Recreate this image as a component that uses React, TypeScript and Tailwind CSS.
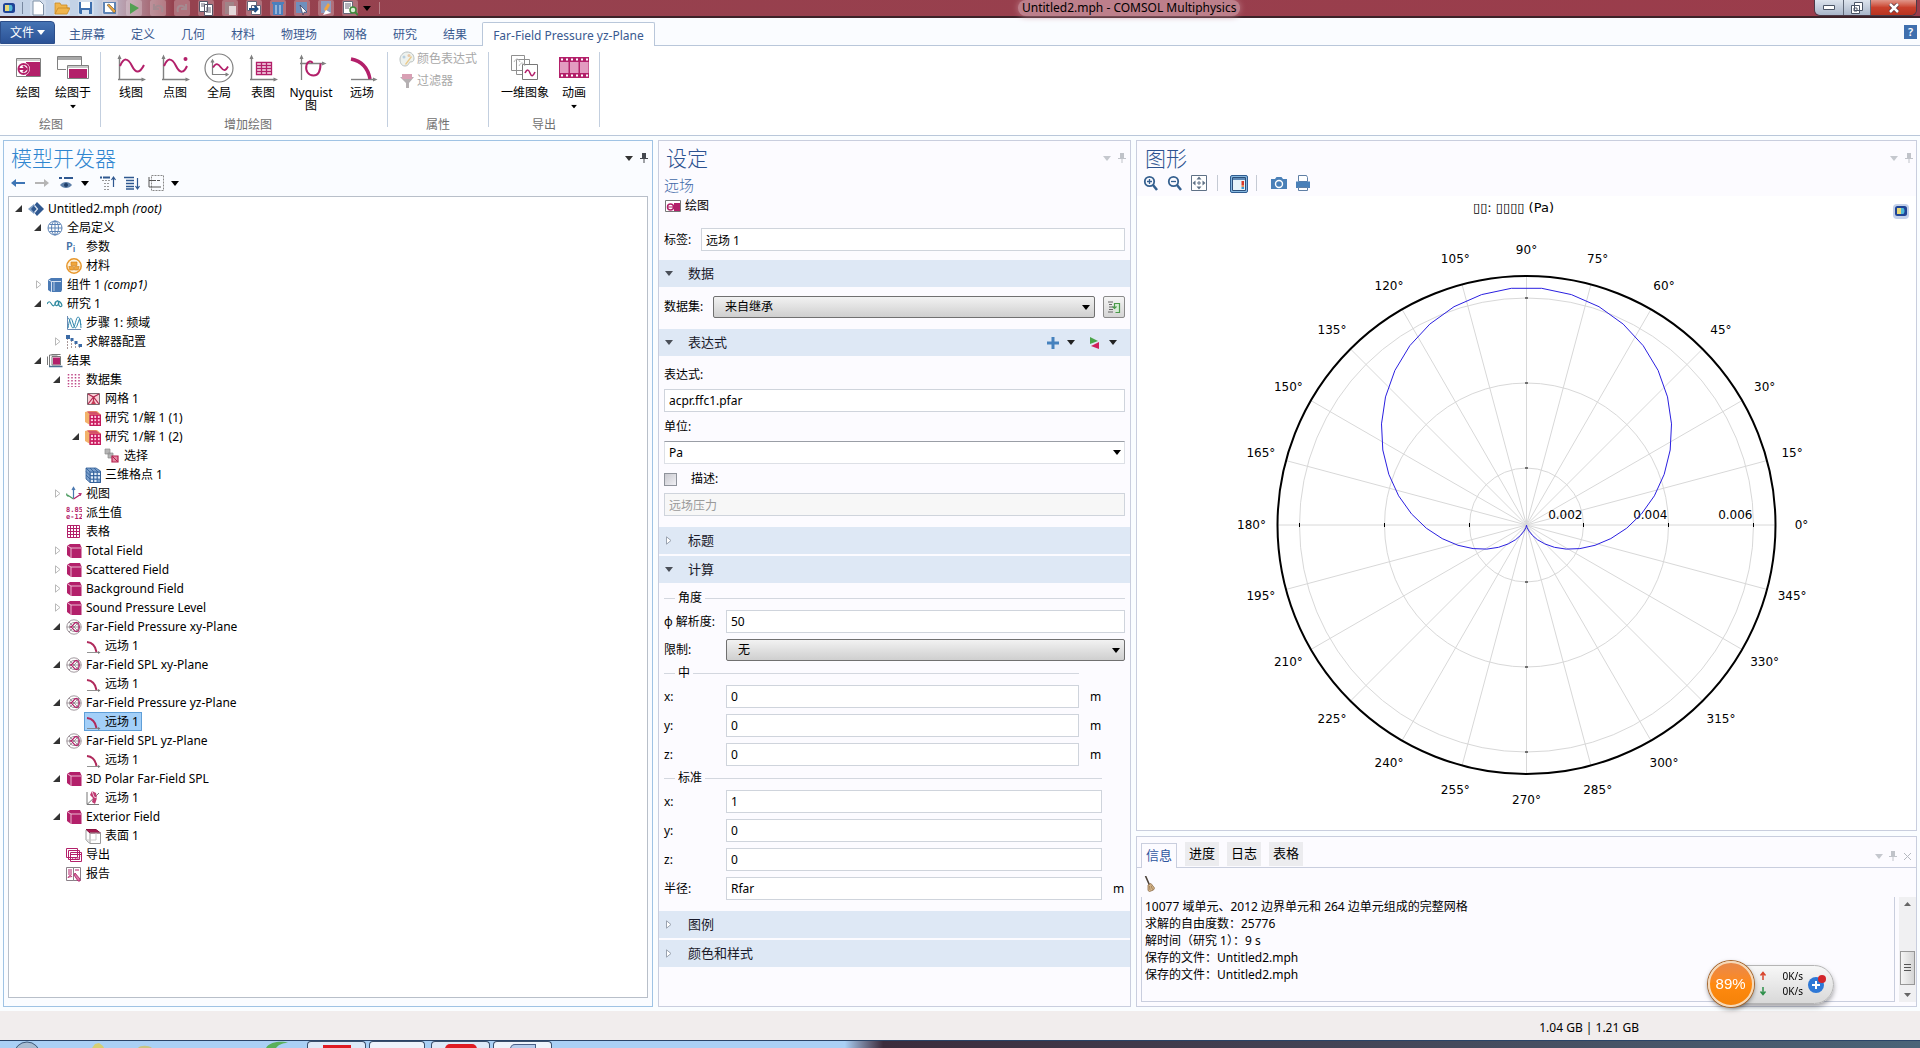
import { useId, useState } from "react"
import type { ReactNode } from "react"
import { clsx } from "clsx"

const MAGENTA = "#b3206a"
const GRAY = "#808080"
const BLUE = "#4470a6"

/* ---------- small glyphs ---------- */

function Caret({ className = "text-black" }: { className?: string }) {
  return (
    <svg className={clsx("h-[5px] w-[8px] shrink-0", className)} viewBox="0 0 8 5" fill="currentColor" aria-hidden="true">
      <path d="M0 0h8L4 5z" />
    </svg>
  )
}

function Pin({ className = "text-[#44484f]" }: { className?: string }) {
  return (
    <svg className={clsx("h-[10px] w-[8px] shrink-0", className)} viewBox="0 0 8 10" fill="currentColor" aria-hidden="true">
      <path d="M2 0h4v5h2v1H4.500v4h-1V6H0V5h2z" />
    </svg>
  )
}

/* ---------- ribbon icons, 32 x 32 ---------- */

type BigIcon = "plot" | "plotIn" | "line" | "point" | "global" | "table" | "nyquist" | "far" | "image" | "movie"

const axes = (
  <g stroke={GRAY} strokeWidth="1.4" fill={GRAY}>
    <path d="M4.500 5v23M3 27.500h25" fill="none" />
    <path d="M2.500 7l2-4.500 2 4.500zM26.500 25.500l4.500 2-4.500 2z" strokeWidth="0" />
  </g>
)

const bigIcons: Record<BigIcon, ReactNode> = {
  plot: (
    <>
      <path d="M4.500 6.500h24v18h-24z" fill="#fff" stroke={GRAY} />
      <path d="M5 7h23v2H5z" fill="#cfcfcf" />
      <path d="M14 10h14v14H14z" fill={MAGENTA} />
      <circle cx="11.500" cy="17" r="6.500" fill="#fff" />
      <circle cx="11.500" cy="17" r="5" fill="#fff" stroke={MAGENTA} strokeWidth="2" />
      <path d="M6 17h8M11 14l3.500 3-3.500 3" fill="none" stroke={MAGENTA} strokeWidth="2" />
    </>
  ),
  plotIn: (
    <>
      <path d="M.5 4.500h24v13H.500z" fill="#fff" stroke={GRAY} />
      <path d="M1 5h23v3H1z" fill="#a8a8a8" />
      <path d="M9 13h23v15H9z" fill="#fff" />
      <path d="M10.500 13.500h21v13h-21z" fill="#fff" stroke={GRAY} />
      <path d="M11 14h20v2H11z" fill="#c8c8c8" />
      <path d="M12 17h18v9H12z" fill={MAGENTA} />
    </>
  ),
  line: (
    <>
      {axes}
      <path d="M5 14c4-9 8-8 12 0s8 7 12-1" fill="none" stroke={MAGENTA} strokeWidth="2" />
    </>
  ),
  point: (
    <>
      {axes}
      <path d="M5 14c4-9 8-8 12 0s8 7 11 0" fill="none" stroke={MAGENTA} strokeWidth="2" />
      <circle cx="26.500" cy="7" r="2" fill={MAGENTA} />
    </>
  ),
  global: (
    <>
      <circle cx="16" cy="16" r="14" fill="#fff" stroke={GRAY} strokeWidth="1.200" />
      <path d="M9.500 8v14.500H24M8 10.500l1.500-2.500L11 10.500M22.500 21l2.500 1.500-2.500 1.500" fill="none" stroke={GRAY} strokeWidth="1.200" />
      <path d="M10 15.500c3-5 5-4 8 0s5 3 7-1" fill="none" stroke={MAGENTA} strokeWidth="1.800" />
    </>
  ),
  table: (
    <>
      {axes}
      <path d="M9.500 10.500h15v12h-15zM9.500 13.500h15M9.500 16.500h15M9.500 19.500h15M14.500 10.500v12M19.500 10.500v12" fill="#f8e3ee" stroke={MAGENTA} strokeWidth="1.300" />
    </>
  ),
  nyquist: (
    <>
      <path d="M6.500 5v23M5 11.500h24" fill="none" stroke={GRAY} strokeWidth="1.300" />
      <path d="M4.500 7l2-4.500 2 4.500zM27 9.500l4.500 2-4.500 2z" fill={GRAY} />
      <path d="M17.500 11c-1-2.500-5-2-6 2-1.500 6 2 10.500 7 10.500s7-5 7-12" fill="none" stroke={MAGENTA} strokeWidth="2" />
    </>
  ),
  far: (
    <>
      <path d="M5 27.500h23" stroke={GRAY} strokeWidth="1.400" />
      <path d="M27 25.500l4.500 2-4.500 2z" fill={GRAY} />
      <path d="M5 7c10 2 17 9 19 20" fill="none" stroke={MAGENTA} strokeWidth="3.500" />
    </>
  ),
  image: (
    <>
      <g fill="#fff" stroke="#909090">
        <path d="M2.500 3.500h13v15h-13zM7.500 7.500h13v15h-13z" />
        <path d="M13.500 12.500h15v15h-15z" stroke="#777" />
      </g>
      <path d="M5 10c2-4 4-4 6 0M10 14c2-4 4-4 6 0" fill="none" stroke="#b8b8b8" />
      <path d="M16 21c2-4 3.500-4 5 0s3 3.500 5-1" fill="none" stroke={MAGENTA} strokeWidth="1.600" />
    </>
  ),
  movie: (
    <>
      <path d="M1 5h30v21H1z" fill={MAGENTA} />
      <path d="M2 10h8.500v11H2zM12 10h8.500v11H12zM22 10h8.500v11H22z" fill="#e39bc0" />
      <path d="M3 7.500h27M3 23.500h27" stroke="#fff" strokeWidth="2" strokeDasharray="2 3" />
    </>
  ),
}

/* ---------- tree icons, 16 x 16 ---------- */

type TreeIcon =
  | "root" | "globe" | "param" | "material" | "component" | "study" | "freq" | "solver" | "results" | "datasets"
  | "mesh" | "solution" | "selection" | "grid3d" | "views" | "derived" | "tables" | "cube" | "polar" | "farfield"
  | "far3d" | "surface" | "export" | "report"

const treeIcons: Record<TreeIcon, ReactNode> = {
  root: (
    <>
      <path d="M0 8l6-5v10z" fill="#7d9dc4" />
      <path d="M9 1l7 7-7 7-6-7z" fill="#2f5890" />
      <path d="M6.500 4.500l3 3.500-3 3.500" fill="none" stroke="#dfe9f5" strokeWidth="1.200" />
    </>
  ),
  globe: (
    <g fill="none" stroke="#5b82b5">
      <circle cx="8" cy="8" r="7" />
      <ellipse cx="8" cy="8" rx="3.500" ry="7" />
      <path d="M1 8h14M2.500 4.500h11M2.500 11.500h11M8 1v14" />
    </g>
  ),
  param: (
    <text x="0" y="11" fontSize="11" fontWeight="600" fill={BLUE}>
      P<tspan fontSize="9" dy="2">i</tspan>
    </text>
  ),
  material: (
    <>
      <circle cx="8" cy="8" r="7.200" fill="#fff3dc" stroke="#e8972c" strokeWidth="1.500" />
      <path d="M5 4h6v3.500H5zM2.800 8.500h4.700V12H3.800zM8.500 8.500h4.700L12.200 12H8.500z" fill="#f0a63c" stroke="#cf7d17" strokeWidth=".6" />
    </>
  ),
  component: (
    <>
      <path d="M1 3l3-2h11v12l-1 2H4l-3-2z" fill="#4a7ab5" />
      <path d="M4.500 15V4.500H14M4.500 4.500L1.500 3" fill="none" stroke="#d5e2f2" />
      <path d="M7 5v9" stroke="#d5e2f2" strokeWidth=".8" />
    </>
  ),
  study: (
    <path d="M0 8c1.500-3 3-3 4.500 0s3 2 4-1 3-3 3 0-3 3.500-3.500 1 3-4 5-2 2.500 4 1 4.500-3-2-2-4" fill="none" stroke="#2e8aa0" strokeWidth="1.200" />
  ),
  freq: (
    <>
      <path d="M1.500 1v13.500H15" fill="none" stroke="#6b8bb5" />
      <path d="M2 13C4 1 5 1 7 8s3 6 5 0 2-6 3 5M2 3c2 0 3 10 5 10S10 2 12 2s2 5 3 8" fill="none" stroke="#3287ad" />
    </>
  ),
  solver: (
    <>
      <path d="M1.500 4v11M5.500 6v9M9.500 9v6M13.500 12v3" stroke="#a99" strokeDasharray="2 1" />
      <path d="M0 1h4v4H0zM4.500 4h3v3h-3zM8.500 7h3v3h-3zM12.500 10H16v3h-3.500z" fill="#3b6aa5" />
    </>
  ),
  results: (
    <>
      <path d="M.5 12V3.500M2.500 13.500V2h8M4.500 1.500h9" fill="none" stroke="#777" />
      <path d="M5 3.500h8.500v8.500H5z" fill="#fff" stroke="#777" />
      <path d="M6 4.500h7v7H6z" fill="#b3206a" />
      <path d="M2 13.500h13.500" stroke="#4a6f90" strokeWidth="1.500" />
    </>
  ),
  datasets: (
    <path d="M2.500 2v13M6 2v13M9.500 2v13M13 2v13" stroke="#c04a88" strokeWidth="1.500" strokeDasharray="1.500 1.500" />
  ),
  mesh: (
    <>
      <path d="M2.500 2.500h12v11h-12z" fill="#f9cfd6" stroke="#7a6a70" />
      <path d="M3 3l5.500 3L14 3M3 13l5.500-7L14 13M8.500 6v7" stroke="#b0284f" fill="none" strokeWidth="1.200" />
      <path d="M6 13l2.500-4 2.500 4z" fill="#c63a55" />
    </>
  ),
  solution: (
    <>
      <path d="M0 2l4-1h8l3.500 3v11H5l-5-3z" fill="#f2b26b" />
      <path d="M5 5h10.500v10.500H5zM5 8.500h10.500M5 12h10.500M8.500 5v10.500M12 5v10.500" fill="#e8508a" stroke="#c2185b" strokeWidth="1.200" />
      <path d="M6 6h2v2H6zM9.500 6h1.500v2H9.500zM13 6h1.500v2H13zM6 9.500h2V11H6zM9.500 9.500h1.500V11H9.500zM13 9.500h1.500V11H13zM6 13h2v1.500H6zM9.500 13h1.500v1.500H9.500zM13 13h1.500v1.500H13z" fill="#fbd3e2" />
      <path d="M5 4.500L2 1.500h9l4 3" fill="#d4506a" />
    </>
  ),
  selection: (
    <>
      <path d="M1 1h5v5H1zM4 5h5v5H4z" fill="#b5b5b5" stroke="#8c8c8c" strokeWidth=".7" />
      <path d="M8 8h6v6H8z" fill="#e58ba5" stroke="#b3204f" strokeWidth="1.200" />
      <path d="M8.500 8.500l5 5" stroke="#b3204f" />
    </>
  ),
  grid3d: (
    <>
      <path d="M1 1h10l4.500 3v11.500H5L1 12z" fill="#7ba0cc" stroke="#2f5c96" strokeWidth=".8" />
      <path d="M5 5h10.500v10.500H5zM5 8.500h10.500M5 12h10.500M8.500 5v10.500M12 5v10.500M1 1l4 4M1 4.500l4 4M1 8l4 4M5 1l4 4M9 1l4 4" fill="none" stroke="#2f5c96" strokeWidth=".8" />
      <path d="M6 6h2v2H6zM9.500 6h2v2h-2zM13 6h2v2h-2zM6 9.500h2v2H6zM9.500 9.500h2v2h-2zM13 9.500h2v2h-2zM6 13h2v2H6zM9.500 13h2v2h-2z" fill="#e3edf8" />
    </>
  ),
  views: (
    <g fill="none" strokeWidth="1.200">
      <path d="M7.500 12V2M6 4l1.500-2.500L9 4" stroke="#4a78b0" />
      <path d="M7.500 13L1.500 9M.5 7.500l.5 2 1.500 1" stroke="#4d9c62" />
      <path d="M7.500 13l7-4.500M12.500 7.500l2.500.2-1 2" stroke="#b3206a" />
    </g>
  ),
  derived: (
    <g fill={MAGENTA} fontSize="7" fontWeight="700" fontFamily="'DejaVu Sans Mono', monospace">
      <text x="0" y="7">8.85</text>
      <text x="0" y="14">e-12</text>
    </g>
  ),
  tables: (
    <path d="M1.500 1.500h12v12h-12zM1.500 4.500h12M1.500 7.500h12M1.500 10.500h12M4.500 1.500v12M7.500 1.500v12M10.500 1.500v12" fill="#fff" stroke={MAGENTA} />
  ),
  cube: (
    <>
      <path d="M1 3l3-2h10l1.500 3.500V15H5l-4-3z" fill="#b3206a" />
      <path d="M5 15V5h10M5 5L1.500 3" fill="none" stroke="#f0cbdd" strokeWidth=".9" />
    </>
  ),
  polar: (
    <g fill="none" stroke="#8a7f86" strokeWidth=".8">
      <circle cx="8" cy="8" r="7.200" />
      <circle cx="8" cy="8" r="4.500" />
      <path d="M.8 8h14.400M3 3l10 10M13 3L3 13" />
      <path d="M4 8c4 0 3-5 7-4.500 3 1 3 8 0 9C7 13 8 8 4 8z" stroke="#b3206a" strokeWidth="1.200" />
    </g>
  ),
  farfield: (
    <>
      <path d="M2 14.500h12" stroke="#777" strokeWidth=".8" />
      <path d="M2 4c5 .5 8.500 4 9.500 10" fill="none" stroke="#b02a5c" strokeWidth="2" />
      <path d="M13 13l2.500 1.500L13 16z" fill="#777" />
    </>
  ),
  far3d: (
    <>
      <path d="M2 2v12.500h12M2 14.500L14 3" fill="none" stroke="#777" />
      <path d="M7 1l4 2 1 5-2 6-3-2 1-4-3-3z" fill="#c03a72" />
      <path d="M7 1l2 6 3 1" fill="none" stroke="#fff" strokeWidth=".7" />
    </>
  ),
  surface: (
    <>
      <path d="M1 1.500h10L15.500 5H5z" fill="#a3184f" stroke="#8a1040" />
      <path d="M1 2v10l4 3.500h10.500V5H5v10" fill="none" stroke="#9a9a9a" />
      <path d="M1 12h10V5" fill="none" stroke="#c9c9c9" />
    </>
  ),
  export: (
    <g fill="#fff" stroke={MAGENTA}>
      <path d="M.5 1.500h11v9H.500zM2.500 3.500h11v9h-11zM4.500 5.500h11v9h-11z" />
      <path d="M4.500 7.500h11M6 13c1-3 2-3 3.500-1.500S12 12 14 9" fill="none" />
    </g>
  ),
  report: (
    <>
      <path d="M.5 1.500h7v13h-7zM7.500 1.500h7v13h-7z" fill="#fff" stroke="#8b8088" />
      <path d="M2 4h4M2 6h4M2 8h4M9 4h4" stroke={MAGENTA} />
      <path d="M2 12c1-3 3-3 4-1M9 7l5 6v2h-2L8 9z" stroke={MAGENTA} fill="#d67aa6" strokeWidth=".9" />
    </>
  ),
}

/* ---------- title bar ---------- */

const quickTools: { label: string; icon: ReactNode }[] = [
  { label: "新建", icon: <path d="M3 1h7l3.500 3.500V15H3z" fill="#fff" stroke="#7f90a5" /> },
  {
    label: "打开",
    icon: <path d="M1 3h5l1 2h6v3h3l-3 6H1zM1 14l3-6h11" fill="#f0b54d" stroke="#c98a25" strokeWidth=".8" />,
  },
  {
    label: "保存",
    icon: (
      <>
        <path d="M1 2h13v12H2l-1-1z" fill="#3d6fae" />
        <path d="M3 2h9v6H3z" fill="#fff" />
        <path d="M4 10h7v4H4z" fill="#d5e2f2" />
      </>
    ),
  },
  {
    label: "另存为",
    icon: (
      <>
        <path d="M1 2h13v12H2l-1-1z" fill="#5d83b5" />
        <path d="M3 3h9v9H3z" fill="#fff" />
        <path d="M5 5l7 8 2-2-7-7z" fill="#e9a33a" stroke="#555" strokeWidth=".6" />
      </>
    ),
  },
  { label: "计算", icon: <path d="M4 3l9 5-9 6z" fill="#52a052" /> },
  { label: "撤销", icon: <path d="M4 4v5h5M4 9c4-6 10-3 8 3" fill="none" stroke="#a58a90" strokeWidth="2" /> },
  { label: "重做", icon: <path d="M12 4v5H7M12 9C8 3 2 6 4 12" fill="none" stroke="#a58a90" strokeWidth="2" /> },
  {
    label: "复制",
    icon: (
      <>
        <path d="M1.500 1.500h8v10h-8zM6.500 4.500h8v11h-8z" fill="#fff" stroke="#556" />
        <path d="M3 4h4M3 6h3M8 8h5M8 10h5M8 12h5" stroke="#667" />
      </>
    ),
  },
  {
    label: "粘贴",
    icon: (
      <>
        <path d="M3 2h9v12H3z" fill="#a08488" />
        <path d="M7 6h7v9H7z" fill="#e5d8da" />
      </>
    ),
  },
  {
    label: "创建副本",
    icon: (
      <>
        <path d="M1.500 1.500h9v9h-9zM5.500 5.500h9v9h-9z" fill="#fff" stroke="#667" />
        <path d="M3 9h8M8.500 6l3 3-3 3" fill="none" stroke="#1f4f86" strokeWidth="2" />
      </>
    ),
  },
  {
    label: "删除",
    icon: (
      <>
        <path d="M3 4h10v11H3zM2 2h12v2H2z" fill="#4b80bd" />
        <path d="M6 5v9M10 5v9" stroke="#dbe8f6" />
      </>
    ),
  },
  {
    label: "选择",
    icon: (
      <>
        <path d="M2 2h11v11H2z" fill="#6f8fbd" />
        <path d="M6 5l7 7-3 .3L9 15z" fill="#fff" stroke="#335" strokeWidth=".7" />
      </>
    ),
  },
  {
    label: "编辑",
    icon: (
      <>
        <path d="M3 1h10v12H3z" fill="#8d9cc0" />
        <path d="M6 9l4-6 2 2-4 7z" fill="#f0a440" />
        <path d="M5 15l8-2-5-3z" fill="#fff" />
      </>
    ),
  },
  {
    label: "查找",
    icon: (
      <>
        <path d="M1.500 1.500h9v12h-9z" fill="#fff" stroke="#667" />
        <path d="M3 4h6M3 6h6M3 8h4" stroke="#667" />
        <circle cx="11" cy="10" r="3" fill="#d8efd4" stroke="#3f8a3a" strokeWidth="1.500" />
        <path d="M13 12l3 3" stroke="#3f8a3a" strokeWidth="2" />
      </>
    ),
  },
]

function ComsolMark() {
  return (
    <svg className="h-4 w-4 shrink-0" viewBox="0 0 16 16" aria-hidden="true">
      <rect x="0" y="1" width="16" height="15" rx="4" fill="#c3d0ea" />
      <rect x="2" y="3" width="12" height="10" rx="2.500" fill="#1f4496" />
      <path d="M4 5h5v6H4z" fill="#e8d878" />
      <path d="M8 5h2c2 0 2 6 0 6H8z" fill="#52b8d8" />
    </svg>
  )
}

function TitleBar() {
  return (
    <div className="relative flex h-[18px] items-center justify-between border-b-2 border-[#3c2228] bg-linear-to-r from-[#c3d2e6] from-5% via-[#95424f] via-9% to-[#9b3c4b]">
      <div className="flex items-center pl-px">
        <ComsolMark />
        <span className="ml-[5px] h-3 w-px bg-[#7888a0]" />
        <div className="flex gap-2 pl-[7px]">
          {quickTools.map((tool) => (
            <button key={tool.label} type="button" aria-label={tool.label} className="h-4 w-4 rounded-xs bg-white/25">
              <svg className="h-4 w-4" viewBox="0 0 16 16" aria-hidden="true">
                {tool.icon}
              </svg>
            </button>
          ))}
        </div>
        <span className="ml-[5px] flex items-center gap-2">
          <Caret />
          <span className="h-3 w-px bg-[#b98088]" />
        </span>
      </div>
      <h1 className="absolute left-1/2 ml-[58px] rounded-full bg-[#bd7f8b] px-1 text-[12px] leading-4 text-black shadow-[0_0_6px_#bd7f8b]">
        Untitled2.mph - COMSOL Multiphysics
      </h1>
      <div className="mr-[3px] flex h-4 self-start overflow-hidden rounded-b-md border border-t-0 border-[#4c3a48]">
        <button type="button" aria-label="最小化" className="flex w-[28px] items-center justify-center bg-linear-to-b from-[#dde4ee] to-[#a9b6c9]">
          <svg className="h-[5px] w-[12px]" viewBox="0 0 12 5" aria-hidden="true">
            <path d="M.5.500h11v4H.500z" fill="#fff" stroke="#4b5566" />
          </svg>
        </button>
        <button type="button" aria-label="还原" className="flex w-[28px] items-center justify-center border-x border-[#5f6777] bg-linear-to-b from-[#dde4ee] to-[#a9b6c9]">
          <svg className="h-[12px] w-[12px]" viewBox="0 0 12 12" aria-hidden="true">
            <path d="M3.500.500h8v8h-8zM.5 3.500h8v8h-8zM3 6h3v3H3z" fill="#fff" stroke="#4b5566" />
          </svg>
        </button>
        <button type="button" aria-label="关闭" className="flex w-[45px] items-center justify-center bg-linear-to-b from-[#e0968a] via-[#c9402c] to-[#b8331f]">
          <svg className="h-[10px] w-[12px]" viewBox="0 0 12 10" aria-hidden="true">
            <path d="M2 1l8 8M10 1L2 9" stroke="#53303a" strokeWidth="4" />
            <path d="M2 1l8 8M10 1L2 9" stroke="#fff" strokeWidth="2.500" />
          </svg>
        </button>
      </div>
    </div>
  )
}

/* ---------- ribbon ---------- */

const ribbonTabs = ["主屏幕", "定义", "几何", "材料", "物理场", "网格", "研究", "结果"]

function RibbonTabs() {
  return (
    <nav className="flex h-[28px] items-end border-b border-[#b9c7da] bg-[#fafcff]">
      <button type="button" className="mr-[1px] mb-px flex h-[23px] w-[55px] items-center justify-center gap-[3px] rounded-tr-sm border border-[#2c4e8a] bg-linear-to-b from-[#4674b4] to-[#2b5296] text-[12px] text-white">
        文件
        <Caret className="text-white" />
      </button>
      {ribbonTabs.map((tab) => (
        <a key={tab} href="#ribbon" className="flex h-[20px] items-center px-[13px] text-[12px] leading-none text-[#3a5a90]">
          {tab}
        </a>
      ))}
      <a
        href="#ribbon"
        aria-current="page"
        className="-mb-px ml-[2px] flex h-[24px] items-center rounded-t-xs border border-b-0 border-[#b9c7da] bg-white px-[10px] pt-[3px] text-[12px] leading-none whitespace-nowrap text-[#3a5a90]"
      >
        Far-Field Pressure yz-Plane
      </a>
      <button type="button" aria-label="帮助" className="mr-[3px] mb-[6px] ml-auto h-[14px] w-[13px] bg-[#3f6fae] text-[11px] leading-[14px] font-semibold text-white">
        ?
      </button>
    </nav>
  )
}

function RibbonButton({ icon, label, menu, className }: { icon: BigIcon; label: string; menu?: boolean; className: string }) {
  return (
    <button type="button" className={clsx("flex flex-col items-center pt-[6px] text-[12px] leading-[13px] text-black", className)}>
      <svg className="mb-[2px] h-[32px] w-[32px] shrink-0" viewBox="0 0 32 32" aria-hidden="true">
        {bigIcons[icon]}
      </svg>
      <span>{label}</span>
      {menu && <Caret className="mt-[5px] scale-75 text-black" />}
    </button>
  )
}

function RibbonGroup({ title, children, className }: { title: string; children: ReactNode; className?: string }) {
  return (
    <section className="flex">
      <div className={clsx("flex flex-col justify-between pb-[2px]", className)}>
        <div className="flex">{children}</div>
        <h2 className="text-center text-[12px] leading-[16px] text-[#707070]">{title}</h2>
      </div>
      <span className="mt-[6px] mb-[8px] w-px bg-[#c3cfdf]" />
    </section>
  )
}

function Ribbon() {
  return (
    <div id="ribbon" className="flex h-[90px] border-b border-[#b9c7da] bg-white">
      <RibbonGroup title="绘图" className="pr-[4px] pl-[6px]">
        <RibbonButton icon="plot" label="绘图" className="w-[44px]" />
        <RibbonButton icon="plotIn" label="绘图于" menu className="w-[46px]" />
      </RibbonGroup>
      <RibbonGroup title="增加绘图" className="pl-[8px]">
        <RibbonButton icon="line" label="线图" className="w-[44px]" />
        <RibbonButton icon="point" label="点图" className="w-[44px]" />
        <RibbonButton icon="global" label="全局" className="w-[44px]" />
        <RibbonButton icon="table" label="表图" className="w-[44px]" />
        <RibbonButton icon="nyquist" label="Nyquist 图" className="w-[52px]" />
        <RibbonButton icon="far" label="远场" className="w-[50px]" />
      </RibbonGroup>
      <RibbonGroup title="属性" className="px-[11px]">
        <div className="flex flex-col gap-[6px] pt-[5px] text-[12px] leading-[16px] text-[#a8a8a8]">
          <button type="button" disabled className="flex items-center gap-[2px]">
            <svg className="h-4 w-4" viewBox="0 0 16 16" aria-hidden="true">
              <path d="M8 1c5 0 7 3 7 7 0 3-3 3-4 3s-1 4-5 4-5-4-5-7 3-7 7-7z" fill="#eef2ee" stroke="#b8c0c0" />
              <circle cx="5" cy="6" r="1.500" fill="#b7cfe0" />
              <circle cx="10" cy="4.500" r="1.500" fill="#e8c8a8" />
              <path d="M6 13l6-8 1 1-6 8z" fill="#eac98a" />
            </svg>
            颜色表达式
          </button>
          <button type="button" disabled className="flex items-center gap-[2px]">
            <svg className="h-4 w-4" viewBox="0 0 16 16" aria-hidden="true">
              <path d="M1 4h14l-5 6v5H7v-5z" fill="#b5b0b2" />
              <path d="M3 1h10v5H3z" fill="#d8a0b4" />
            </svg>
            过滤器
          </button>
        </div>
      </RibbonGroup>
      <RibbonGroup title="导出" className="px-[6px]">
        <RibbonButton icon="image" label="一维图象" className="w-[60px]" />
        <RibbonButton icon="movie" label="动画" menu className="w-[38px]" />
      </RibbonGroup>
    </div>
  )
}

/* ---------- model builder ---------- */

interface TreeNode {
  id: string
  icon: TreeIcon
  label: string
  tag?: string
  collapsed?: boolean
  children?: TreeNode[]
}

const farNode = (id: string): TreeNode => ({ id, icon: "farfield", label: "远场 1" })

const tree: TreeNode = {
  id: "root",
  icon: "root",
  label: "Untitled2.mph",
  tag: "(root)",
  children: [
    {
      id: "glob",
      icon: "globe",
      label: "全局定义",
      children: [
        { id: "par", icon: "param", label: "参数" },
        { id: "mat", icon: "material", label: "材料" },
      ],
    },
    { id: "comp1", icon: "component", label: "组件 1", tag: "(comp1)", collapsed: true },
    {
      id: "std1",
      icon: "study",
      label: "研究 1",
      children: [
        { id: "freq", icon: "freq", label: "步骤 1: 频域" },
        { id: "sol", icon: "solver", label: "求解器配置", collapsed: true },
      ],
    },
    {
      id: "res",
      icon: "results",
      label: "结果",
      children: [
        {
          id: "dset",
          icon: "datasets",
          label: "数据集",
          children: [
            { id: "mesh1", icon: "mesh", label: "网格 1" },
            { id: "dset1", icon: "solution", label: "研究 1/解 1 (1)" },
            {
              id: "dset2",
              icon: "solution",
              label: "研究 1/解 1 (2)",
              children: [{ id: "sel", icon: "selection", label: "选择" }],
            },
            { id: "grid", icon: "grid3d", label: "三维格点 1" },
          ],
        },
        { id: "view", icon: "views", label: "视图", collapsed: true },
        { id: "numeric", icon: "derived", label: "派生值" },
        { id: "tbl", icon: "tables", label: "表格" },
        { id: "pg1", icon: "cube", label: "Total Field", collapsed: true },
        { id: "pg2", icon: "cube", label: "Scattered Field", collapsed: true },
        { id: "pg3", icon: "cube", label: "Background Field", collapsed: true },
        { id: "pg4", icon: "cube", label: "Sound Pressure Level", collapsed: true },
        { id: "pg5", icon: "polar", label: "Far-Field Pressure xy-Plane", children: [farNode("pg5.ff")] },
        { id: "pg6", icon: "polar", label: "Far-Field SPL xy-Plane", children: [farNode("pg6.ff")] },
        { id: "pg7", icon: "polar", label: "Far-Field Pressure yz-Plane", children: [farNode("pg7.ff")] },
        { id: "pg8", icon: "polar", label: "Far-Field SPL yz-Plane", children: [farNode("pg8.ff")] },
        {
          id: "pg9",
          icon: "cube",
          label: "3D Polar Far-Field SPL",
          children: [{ id: "pg9.ff", icon: "far3d", label: "远场 1" }],
        },
        {
          id: "pg10",
          icon: "cube",
          label: "Exterior Field",
          children: [{ id: "pg10.surf", icon: "surface", label: "表面 1" }],
        },
        { id: "exp", icon: "export", label: "导出" },
        { id: "rpt", icon: "report", label: "报告" },
      ],
    },
  ],
}

interface TreeItemProps {
  node: TreeNode
  selected: string
  onSelect: (id: string) => void
}

function TreeItem({ node, selected, onSelect }: TreeItemProps) {
  const isSelected = node.id === selected

  return (
    <li>
      <div className="flex h-[19px] items-center">
        <span className="flex w-[14px] justify-center">
          {node.collapsed && (
            <svg className="ml-[4px] h-[9px] w-[6px]" viewBox="0 0 6 9" aria-hidden="true">
              <path d="M.5.800v7.400L5 4.500z" fill="#fff" stroke="#b8b8b8" />
            </svg>
          )}
          {node.children && (
            <svg className="h-[7px] w-[7px]" viewBox="0 0 7 7" aria-hidden="true">
              <path d="M7 0v7H0z" fill="#333" />
            </svg>
          )}
        </span>
        <button
          type="button"
          onClick={() => onSelect(node.id)}
          className={clsx(
            "ml-[2px] flex h-[19px] items-center gap-[4px] border pr-[2px] text-[12px] leading-[17px] whitespace-nowrap",
            isSelected ? "border-[#5f9fd8] bg-[#a3cff8]" : "border-transparent",
          )}
        >
          <svg className="h-4 w-4 shrink-0" viewBox="0 0 16 16" aria-hidden="true">
            {treeIcons[node.icon]}
          </svg>
          <span>
            {node.label}
            {node.tag && <em> {node.tag}</em>}
          </span>
        </button>
      </div>
      {node.children && (
        <ul className="pl-[19px]">
          {node.children.map((child) => (
            <TreeItem key={child.id} node={child} selected={selected} onSelect={onSelect} />
          ))}
        </ul>
      )}
    </li>
  )
}

function ToolButton({ label, children, className }: { label: string; children: ReactNode; className?: string }) {
  return (
    <button type="button" aria-label={label} className={clsx("flex h-4 items-center", className)}>
      <svg className="h-4 w-4" viewBox="0 0 16 16" fill="none" aria-hidden="true">
        {children}
      </svg>
    </button>
  )
}

function ModelBuilder() {
  const [selected, setSelected] = useState("pg7.ff")

  return (
    <section className="flex min-w-0 flex-col border border-[#9fc3e4] bg-[#fafcff] px-[4px] pb-[8px]">
      <header className="flex h-[34px] items-center justify-between pl-[3px]">
        <h2 className="text-[21px] leading-none font-light text-[#2f86d0]">模型开发器</h2>
        <span className="flex items-center gap-[7px]">
          <Caret className="text-[#333]" />
          <Pin />
        </span>
      </header>
      <div className="flex h-[16px] items-center pl-[2px]">
        <ToolButton label="后退">
          <path d="M1 8l5-4v3h9v2H6v3z" fill="#3d75b5" />
        </ToolButton>
        <ToolButton label="前进" className="ml-[8px]">
          <path d="M15 8l-5-4v3H1v2h9v3z" fill="#b5b5b5" />
        </ToolButton>
        <ToolButton label="显示" className="ml-[8px]">
          <path d="M1 3h3M6 3h9" stroke="#2f5890" strokeWidth="2" />
          <path d="M2 10c3-4 9-4 12 0-3 4-9 4-12 0z" fill="#5d7fa8" />
          <circle cx="8" cy="10" r="2" fill="#1f3f6a" />
        </ToolButton>
        <Caret className="mx-[7px] text-black" />
        <ToolButton label="全部折叠" className="ml-[4px]">
          <path d="M0 2.500h2M3 2.500h7" stroke="#2f5890" strokeWidth="2" />
          <path d="M2 5.500h8M4 8.500h6M4 11.500h6M4 14.500h6" stroke="#999" strokeDasharray="2 1" />
          <path d="M13.500 12V3M11.500 5l2-3 2 3" stroke="#2f5890" strokeWidth="1.200" />
        </ToolButton>
        <ToolButton label="全部展开" className="ml-[8px]">
          <path d="M0 2.500h10M2 5.500h8M2 8.500h8M2 11.500h8M2 14h8" stroke="#2f5890" strokeWidth="1.500" />
          <path d="M13.500 3v10M11.500 11l2 3 2-3" stroke="#2f5890" strokeWidth="1.200" />
        </ToolButton>
        <ToolButton label="树节点文本" className="ml-[8px]">
          <path d="M3.500.500h12v15h-12z" stroke="#888" strokeDasharray="2 1" />
          <path d="M1 2v10h9M1 5.500h7M9 5.500h3M10 12h3" stroke="#555" />
        </ToolButton>
        <Caret className="ml-[7px] text-black" />
      </div>
      <div className="mt-[5px] flex-1 border border-[#b8bfc9] bg-white py-[2px] pl-[2px]">
        <ul>
          <TreeItem node={tree} selected={selected} onSelect={setSelected} />
        </ul>
      </div>
    </section>
  )
}

/* ---------- settings ---------- */

const inputStyle = "h-[23px] min-w-0 flex-1 border border-[#cfd4dc] bg-white px-[4px] text-[12px] text-black outline-none"

function SectionHeader({ title, open, children }: { title: string; open?: boolean; children?: ReactNode }) {
  return (
    <div className="flex h-[27px] items-center bg-[#dee8f5] pr-[13px] pl-[5px]">
      <button type="button" aria-expanded={!!open} className="flex items-center text-[13px] leading-none text-[#1a1a2a]">
        <span className="flex w-[24px] pl-px">
          {open ? (
            <Caret className="text-[#4a4f58]" />
          ) : (
            <svg className="ml-px h-[9px] w-[6px]" viewBox="0 0 6 9" aria-hidden="true">
              <path d="M.5.800v7.400L5 4.500z" fill="#fff" stroke="#9aa3b0" />
            </svg>
          )}
        </span>
        {title}
      </button>
      {children}
    </div>
  )
}

function DropDown({ id, value, className }: { id: string; value: string; className?: string }) {
  return (
    <span className={clsx("relative flex min-w-0 flex-1", className)}>
      <select
        id={id}
        className="h-[22px] w-full appearance-none rounded-xs border border-[#707070] bg-linear-to-b from-[#f2f2f2] to-[#cfcfcf] pl-[11px] text-[12px] text-black outline-none"
      >
        <option>{value}</option>
      </select>
      <Caret className="pointer-events-none absolute top-[9px] right-[5px]" />
    </span>
  )
}

function Field({ label, value, unit, trail }: { label: string; value: string; unit?: string; trail?: "unit" | "column" }) {
  const id = useId()

  return (
    <div className="flex h-[23px] items-center">
      <label htmlFor={id} className="w-[62px] shrink-0">
        {label}
      </label>
      <input id={id} defaultValue={value} className={inputStyle} />
      {trail === "column" && <span className="w-[46px] shrink-0 pl-[11px]">{unit}</span>}
      {trail === "unit" && <span className="w-[23px] shrink-0 pl-[11px]">{unit}</span>}
    </div>
  )
}

function Legend({ title, className }: { title: string; className?: string }) {
  return (
    <div className={clsx("flex h-[16px] items-center gap-[3px]", className)}>
      <span className="h-px w-[11px] bg-[#d3d7df]" />
      <span>{title}</span>
      <span className="h-px flex-1 bg-[#d3d7df]" />
    </div>
  )
}

function Settings() {
  return (
    <section className="flex min-w-0 flex-col border border-[#c9cede] bg-[#fcfbff] text-[12px] leading-[16px] text-black">
      <header className="flex h-[34px] items-center justify-between pr-[4px] pl-[7px]">
        <h2 className="text-[21px] leading-none font-light text-[#2c5290]">设定</h2>
        <span className="flex items-center gap-[7px]">
          <Caret className="text-[#c5c8ce]" />
          <Pin className="text-[#c0c3c9]" />
        </span>
      </header>
      <h3 className="pl-[5px] text-[15px] leading-[20px] font-light text-[#4269a8]">远场</h3>
      <button type="button" className="ml-[6px] flex h-[22px] items-center gap-[4px] self-start">
        <svg className="h-4 w-4" viewBox="0 0 16 16" aria-hidden="true">
          <path d="M.5 2.500h15v11H.500z" fill="#fff" stroke="#777" />
          <path d="M9 5h6v8H9z" fill={MAGENTA} />
          <circle cx="5.500" cy="9" r="3" fill="#fff" stroke={MAGENTA} strokeWidth="1.500" />
          <path d="M3 9h6" stroke={MAGENTA} />
        </svg>
        绘图
      </button>
      <div className="mx-[5px] mt-[11px] mb-[9px] flex items-center">
        <label htmlFor="label" className="w-[37px] shrink-0">
          标签:
        </label>
        <input id="label" defaultValue="远场 1" className={inputStyle} />
      </div>

      <SectionHeader title="数据" open />
      <div className="flex items-center px-[5px] pt-[9px] pb-[11px]">
        <label htmlFor="dataset" className="w-[49px] shrink-0">
          数据集:
        </label>
        <DropDown id="dataset" value="来自继承" />
        <button type="button" aria-label="转到源" className="ml-[8px] flex h-[22px] w-[22px] items-center justify-center rounded-xs border border-[#8a8a8a] bg-linear-to-b from-[#f5f5f5] to-[#d5d5d5]">
          <svg className="h-[14px] w-[14px]" viewBox="0 0 14 14" fill="none" aria-hidden="true">
            <path d="M1 2h5M2 4.500h3M2 7h5M2 9.500h4M1 12h5" stroke="#666" />
            <path d="M8.500 12.500h4v-9h-5v5M5.500 6.500l2 2 2-2" fill="#d5ecd5" stroke="#4b9a4b" strokeWidth="1.200" />
          </svg>
        </button>
      </div>

      <SectionHeader title="表达式" open>
        <span className="ml-auto flex items-center gap-[8px]">
          <button type="button" aria-label="添加表达式" className="flex items-center gap-[8px]">
            <svg className="h-[12px] w-[12px]" viewBox="0 0 12 12" aria-hidden="true">
              <path d="M4.500 0h3v4.500H12v3H7.500V12h-3V7.500H0v-3h4.500z" fill="#4682be" />
            </svg>
            <Caret className="text-[#222]" />
          </button>
          <button type="button" aria-label="替换表达式" className="ml-[5px] flex items-center gap-[9px]">
            <svg className="h-[12px] w-[12px]" viewBox="0 0 12 12" aria-hidden="true">
              <path d="M2 0l8 4-8 3z" fill="#4aa54a" />
              <path d="M11 5v7L3 9z" fill="#d0205c" />
            </svg>
            <Caret className="text-[#222]" />
          </button>
        </span>
      </SectionHeader>
      <div className="flex flex-col px-[5px] pt-[9px] pb-[11px] leading-[20px]">
        <label htmlFor="expr">表达式:</label>
        <span className="mt-[4px] flex">
          <input id="expr" defaultValue="acpr.ffc1.pfar" className={inputStyle} />
        </span>
        <label htmlFor="unit" className="mt-[5px]">
          单位:
        </label>
        <span className="relative mt-[4px] flex">
          <select id="unit" className="h-[23px] w-full appearance-none border border-t-[#9a9ea6] border-r-[#dde0e6] border-b-[#dde0e6] border-l-[#dde0e6] bg-white px-[4px] text-[12px] text-black outline-none">
            <option>Pa</option>
          </select>
          <Caret className="pointer-events-none absolute top-[9px] right-[4px]" />
        </span>
        <label className="mt-[5px] flex items-center gap-[14px]">
          <input type="checkbox" className="h-[13px] w-[13px] appearance-none border border-[#8f939b] bg-linear-to-br from-[#c9c9cf] to-[#f0f0f4]" />
          描述:
        </label>
        <span className="mt-[4px] flex">
          <input aria-label="描述" disabled defaultValue="远场压力" className="h-[23px] min-w-0 flex-1 border border-[#cfd4dc] bg-[#f7f7f7] px-[4px] text-[12px] text-[#9a9a9a]" />
        </span>
      </div>

      <div className="flex flex-col gap-[2px]">
        <SectionHeader title="标题" />
        <SectionHeader title="计算" open />
      </div>
      <div className="flex flex-col px-[5px] pt-[7px] pb-[11px]">
        <Legend title="角度" className="mb-[4px]" />
        <Field label="φ 解析度:" value="50" />
        <div className="mt-[6px] flex items-center">
          <label htmlFor="limit" className="w-[62px] shrink-0">
            限制:
          </label>
          <DropDown id="limit" value="无" />
        </div>
        <Legend title="中" className="mt-[4px] mr-[46px] mb-[4px]" />
        <div className="flex flex-col gap-[6px]">
          <Field label="x:" value="0" unit="m" trail="column" />
          <Field label="y:" value="0" unit="m" trail="column" />
          <Field label="z:" value="0" unit="m" trail="column" />
        </div>
        <Legend title="标准" className="my-[4px] mr-[23px]" />
        <div className="flex flex-col gap-[6px]">
          <Field label="x:" value="1" trail="unit" />
          <Field label="y:" value="0" trail="unit" />
          <Field label="z:" value="0" trail="unit" />
          <Field label="半径:" value="Rfar" unit="m" trail="unit" />
        </div>
      </div>
      <div className="flex flex-col gap-[2px]">
        <SectionHeader title="图例" />
        <SectionHeader title="颜色和样式" />
      </div>
    </section>
  )
}

/* ---------- graphics ---------- */

const CX = 389.5
const CY = 328.5
const OUTER = 249
const rings = [
  { r: 57, label: "0.002" },
  { r: 142, label: "0.004" },
  { r: 227, label: "0.006" },
]
const spokes = Array.from({ length: 24 }, (_, i) => i * 15)

const polar = (r: number, deg: number) => {
  const a = (deg * Math.PI) / 180
  return { x: CX + r * Math.cos(a), y: CY - r * Math.sin(a) }
}

// far-field pressure sampled at 50 angles, starting from 270 degrees
const curve = Array.from({ length: 50 }, (_, i) => {
  const deg = -90 + (i * 360) / 49
  const s = Math.sin((deg * Math.PI) / 180)
  const p = polar(104 + 118.75 * s + 14.75 * s * s, deg)
  return `${p.x.toFixed(1)},${p.y.toFixed(1)}`
}).join(" ")

function PolarPlot() {
  return (
    <svg className="w-full min-h-0 flex-1 bg-white" viewBox="0 0 779 633" role="img" aria-label="远场压力 (Pa)">
      <g fontFamily="'DejaVu Sans', sans-serif" fontSize="12" fill="#000">
        <text x={CX - 13} y="15" fontSize="13" textAnchor="middle">
          ▯▯: ▯▯▯▯ (Pa)
        </text>
        <g stroke="#d8d8d8" fill="none">
          {spokes.map((deg) => {
            const p = polar(OUTER, deg)
            return <line key={deg} x1={CX} y1={CY} x2={p.x} y2={p.y} />
          })}
          {rings.map((ring) => (
            <circle key={ring.r} cx={CX} cy={CY} r={ring.r} />
          ))}
        </g>
        {rings.map((ring) => (
          <g key={ring.r}>
            <path
              d={`M${CX - ring.r} ${CY - 2}v4M${CX + ring.r} ${CY - 2}v4M${CX - 1.5} ${CY - ring.r}h3M${CX - 1.5} ${CY + ring.r}h3`}
              stroke="#000"
            />
            <text x={CX + ring.r - 1} y={CY - 6} textAnchor="end">
              {ring.label}
            </text>
          </g>
        ))}
        <circle cx={CX} cy={CY} r={OUTER} fill="none" stroke="#000" strokeWidth="2" />
        <polyline points={curve} fill="none" stroke="#2a1fe0" strokeWidth="1" />
        {spokes.map((deg) => {
          const p = polar(275, deg)
          return (
            <text key={deg} x={p.x} y={p.y + 3.5} textAnchor="middle">
              {deg}°
            </text>
          )
        })}
      </g>
    </svg>
  )
}

function Graphics() {
  return (
    <section className="relative flex min-w-0 flex-1 flex-col border border-[#c9cede] bg-[#fcfbff]">
      <header className="flex h-[34px] items-center justify-between pr-[3px] pl-[8px]">
        <h2 className="text-[21px] leading-none font-light text-[#2c5290]">图形</h2>
        <span className="flex items-center gap-[7px]">
          <Caret className="text-[#c5c8ce]" />
          <Pin className="text-[#c0c3c9]" />
        </span>
      </header>
      <div className="flex h-[21px] items-start gap-[8px] pl-[6px]">
        <ToolButton label="放大">
          <circle cx="6.500" cy="6.500" r="4.700" stroke="#35608f" strokeWidth="1.800" />
          <path d="M10 10l4 5" stroke="#35608f" strokeWidth="2.500" />
          <path d="M4 6.500h5M6.500 4v5" stroke="#35608f" strokeWidth="1.300" />
        </ToolButton>
        <ToolButton label="缩小">
          <circle cx="6.500" cy="6.500" r="4.700" stroke="#35608f" strokeWidth="1.800" />
          <path d="M10 10l4 5" stroke="#35608f" strokeWidth="2.500" />
          <path d="M4 6.500h5" stroke="#35608f" strokeWidth="1.300" />
        </ToolButton>
        <ToolButton label="缩放到窗口大小">
          <path d="M.5.500h15v15H.500z" fill="#fff" stroke="#5f7186" />
          <path d="M8 1.500l2.500 3h-5zM8 14.500l2.500-3h-5zM1.500 8l3-2.500v5zM14.500 8l-3-2.500v5z" fill="#5f7186" />
          <path d="M8 6v4M6 8h4" stroke="#5f7186" />
        </ToolButton>
        <span className="mx-[2px] h-[16px] w-px bg-[#c5cad4]" />
        <button type="button" aria-label="显示图例" aria-pressed="true" className="ml-[2px] flex h-[18px] w-[18px] items-center justify-center rounded-xs border border-[#2f5c90] bg-[#86b8e0]">
          <svg className="h-[14px] w-[14px]" viewBox="0 0 14 14" aria-hidden="true">
            <path d="M.5.500h13v13H.500z" fill="#e6f3fb" stroke="#2c4f7a" />
            <path d="M1 1h12v2H1z" fill="#5c88b5" />
            <path d="M9.500 4H12v4H9.500z" fill="#d8392b" />
            <path d="M9.500 8H12v2H9.500z" fill="#e98a5a" />
            <path d="M9.500 10H12v2H9.500z" fill="#3b9ad0" />
          </svg>
        </button>
        <span className="mr-[6px] h-[16px] w-px bg-[#c5cad4]" />
        <ToolButton label="截图">
          <path d="M0 4h4l1.500-2h5L12 4h4v10H0z" fill="#4a80b8" />
          <circle cx="8" cy="9" r="3.500" fill="#4a80b8" stroke="#fff" strokeWidth="1.400" />
        </ToolButton>
        <ToolButton label="打印">
          <path d="M3.500.500h8l1 2v4h-9z" fill="#fff" stroke="#5f7fa5" />
          <path d="M1 6.500h14V13H1z" fill="#4a80b8" />
          <path d="M3.500 12.500h9v3h-9z" fill="#fff" stroke="#5f7fa5" />
        </ToolButton>
      </div>
      <PolarPlot />
      <span className="absolute top-[62px] right-[7px]">
        <ComsolMark />
      </span>
    </section>
  )
}

/* ---------- messages ---------- */

const messageTabs = ["信息", "进度", "日志", "表格"]

const log = [
  "10077 域单元、2012 边界单元和 264 边单元组成的完整网格",
  "求解的自由度数：25776",
  "解时间（研究 1）：9 s",
  "保存的文件：Untitled2.mph",
  "保存的文件：Untitled2.mph",
]

function Messages() {
  const [active, setActive] = useState("信息")

  return (
    <section className="flex min-w-0 flex-col border border-[#c9cede] bg-[#fcfbff] pb-[4px]">
      <div className="flex h-[31px] items-end gap-[8px] border-b border-[#c9cede] pl-[4px]">
        {messageTabs.map((tab) => (
          <button
            key={tab}
            type="button"
            onClick={() => setActive(tab)}
            className={clsx(
              "px-[4px] pb-[2px] text-[13px] leading-[22px]",
              tab === active
                ? "-mb-px border border-b-0 border-[#c9cede] bg-[#fcfbff] text-[#2f56a0]"
                : "mb-px bg-[#ececef] text-black",
            )}
          >
            {tab}
          </button>
        ))}
        <span className="mb-[6px] ml-auto flex items-center gap-[6px] pr-[4px]">
          <Caret className="text-[#c5c8ce]" />
          <Pin className="text-[#c0c3c9]" />
          <svg className="h-[9px] w-[9px]" viewBox="0 0 9 9" aria-hidden="true">
            <path d="M1 1l7 7M8 1L1 8" stroke="#b5b9c0" />
          </svg>
        </span>
      </div>
      <button type="button" aria-label="清除" className="mt-[8px] ml-[6px] h-[16px] w-[16px]">
        <svg className="h-4 w-4" viewBox="0 0 16 16" aria-hidden="true">
          <path d="M2.500 0l4 9" stroke="#4a4038" strokeWidth="1.600" />
          <path d="M5 9l3-1.500 3.500 4.500-1 2-4 1.500-1.500-1z" fill="#d9b98c" stroke="#8a6a48" strokeWidth=".8" />
          <path d="M6.500 10l.5 4M8 9.500l1.500 4" stroke="#8a6a48" strokeWidth=".7" />
        </svg>
      </button>
      <div className="mt-[5px] ml-[4px] flex">
        <div className="min-h-[105px] flex-1 border-r border-b border-l border-[#c9cede] px-[3px] pt-px text-[12px] leading-[17px] text-black">
          {log.map((line, i) => (
            <p key={i}>{line}</p>
          ))}
        </div>
        <div className="ml-[4px] flex w-[17px] flex-col items-center justify-between bg-[#f0f0f2] py-[5px]">
          <svg className="h-[4px] w-[7px]" viewBox="0 0 7 4" aria-hidden="true">
            <path d="M0 4h7L3.500 0z" fill="#666" />
          </svg>
          <span className="mt-[36px] flex h-[34px] w-[15px] flex-col items-center justify-center gap-[2px] border border-[#979797] bg-linear-to-r from-[#f5f5f5] to-[#d5d5d5]">
            <span className="h-px w-[7px] bg-[#555]" />
            <span className="h-px w-[7px] bg-[#555]" />
            <span className="h-px w-[7px] bg-[#555]" />
          </span>
          <svg className="h-[4px] w-[7px]" viewBox="0 0 7 4" aria-hidden="true">
            <path d="M0 0h7L3.500 4z" fill="#666" />
          </svg>
        </div>
      </div>
    </section>
  )
}

/* ---------- desktop bits ---------- */

function SpeedBall() {
  return (
    <div className="fixed right-[86px] bottom-[39px] flex h-[50px] items-center">
      <span className="z-10 flex h-[46px] w-[46px] items-center justify-center rounded-full border-2 border-[#f6d9b8] bg-linear-to-b from-[#e88848] via-[#ff8a10] to-[#f58208] font-['Liberation_Sans',sans-serif] text-[15px] text-white shadow-[0_2px_5px_rgba(0,0,0,0.5)] ring-1 ring-[#a8672c]">
        89%
      </span>
      <div className="-ml-[22px] flex h-[39px] items-center rounded-r-full border border-[#b5b5b5] bg-linear-to-b from-[#f7f7f7] to-[#d9d9d9] pr-[6px] pl-[26px] text-[10px] leading-[15px] text-black shadow-[0_3px_5px_rgba(0,0,0,0.35)]">
        <svg className="h-[26px] w-[8px]" viewBox="0 0 8 26" fill="none" aria-hidden="true">
          <path d="M4 9V2M1.500 4.500L4 1.500l2.500 3" stroke="#d8442c" strokeWidth="1.500" />
          <path d="M4 16v7M1.500 20.500L4 23.500l2.500-3" stroke="#2d8f4a" strokeWidth="1.500" />
        </svg>
        <span className="ml-[16px] flex flex-col">
          <span>0K/s</span>
          <span>0K/s</span>
        </span>
        <svg className="ml-[4px] h-[20px] w-[20px]" viewBox="0 0 20 20" aria-hidden="true">
          <circle cx="9" cy="11" r="8" fill="#2e78d6" />
          <path d="M9 7v8M5 11h8" stroke="#fff" strokeWidth="2" />
          <circle cx="15" cy="5" r="4" fill="#d3262b" />
        </svg>
      </div>
    </div>
  )
}

function TaskBar() {
  return (
    <footer className="flex h-[8px] items-end overflow-hidden border-t border-[#2a4468] bg-linear-to-r from-[#aad0f5] from-44% via-[#3b2c3c] via-46% to-[#4a6478]">
      <svg className="h-[7px] w-[300px]" viewBox="0 0 300 7" aria-hidden="true">
        <circle cx="27" cy="14" r="13" fill="#a8bdd2" stroke="#3c5878" />
        <path d="M92 7l3-4 4-1 4 3 1 2z" fill="#d6cf72" />
        <path d="M138 7c2-3 11-3 14 0z" fill="#c9c483" />
        <path d="M266 7c4-7 18-7 22-5-6 0-10 2-12 5z" fill="#59b05a" />
      </svg>
      <div className="ml-[7px] flex gap-[3px]">
        <span className="flex h-[7px] w-[59px] justify-center rounded-t-sm border border-b-0 border-[#3a4f6c] bg-[#dfeaf8] pt-[3px]">
          <span className="h-[4px] w-[28px] bg-[#e01b22]" />
        </span>
        <span className="h-[7px] w-[56px] rounded-t-sm border border-b-0 border-[#3a4f6c] bg-[#eef4fc]" />
        <span className="ml-[3px] flex h-[7px] w-[59px] justify-center rounded-t-sm border border-b-0 border-[#3a4f6c] bg-[#dfeaf8] pt-[2px]">
          <span className="h-[5px] w-[32px] rounded-t-md bg-[#e01b22]" />
        </span>
        <span className="flex h-[7px] w-[59px] justify-center rounded-t-sm border border-b-0 border-[#3a4f6c] bg-[#eef4fc] pt-[2px]">
          <span className="h-[5px] w-[26px] rounded-tl-md border border-b-0 border-[#4a5f86] bg-[#b8cdec]" />
        </span>
      </div>
    </footer>
  )
}

export default function App() {
  return (
    <div className="flex min-h-screen flex-col bg-[#fafdff] font-['Noto_Sans','Noto_Sans_CJK_SC',sans-serif]">
      <TitleBar />
      <RibbonTabs />
      <Ribbon />
      <main className="grid flex-1 grid-cols-[minmax(0,650fr)_minmax(0,473fr)_minmax(0,781fr)] gap-[5px] px-[3px] py-[4px]">
        <ModelBuilder />
        <Settings />
        <div className="flex min-w-0 flex-col gap-[5px]">
          <Graphics />
          <Messages />
        </div>
      </main>
      <div className="flex h-[29px] items-center justify-end bg-[#f1eded] pt-[4px] pr-[281px] text-[12px] text-black">1.04 GB | 1.21 GB</div>
      <TaskBar />
      <SpeedBall />
    </div>
  )
}
